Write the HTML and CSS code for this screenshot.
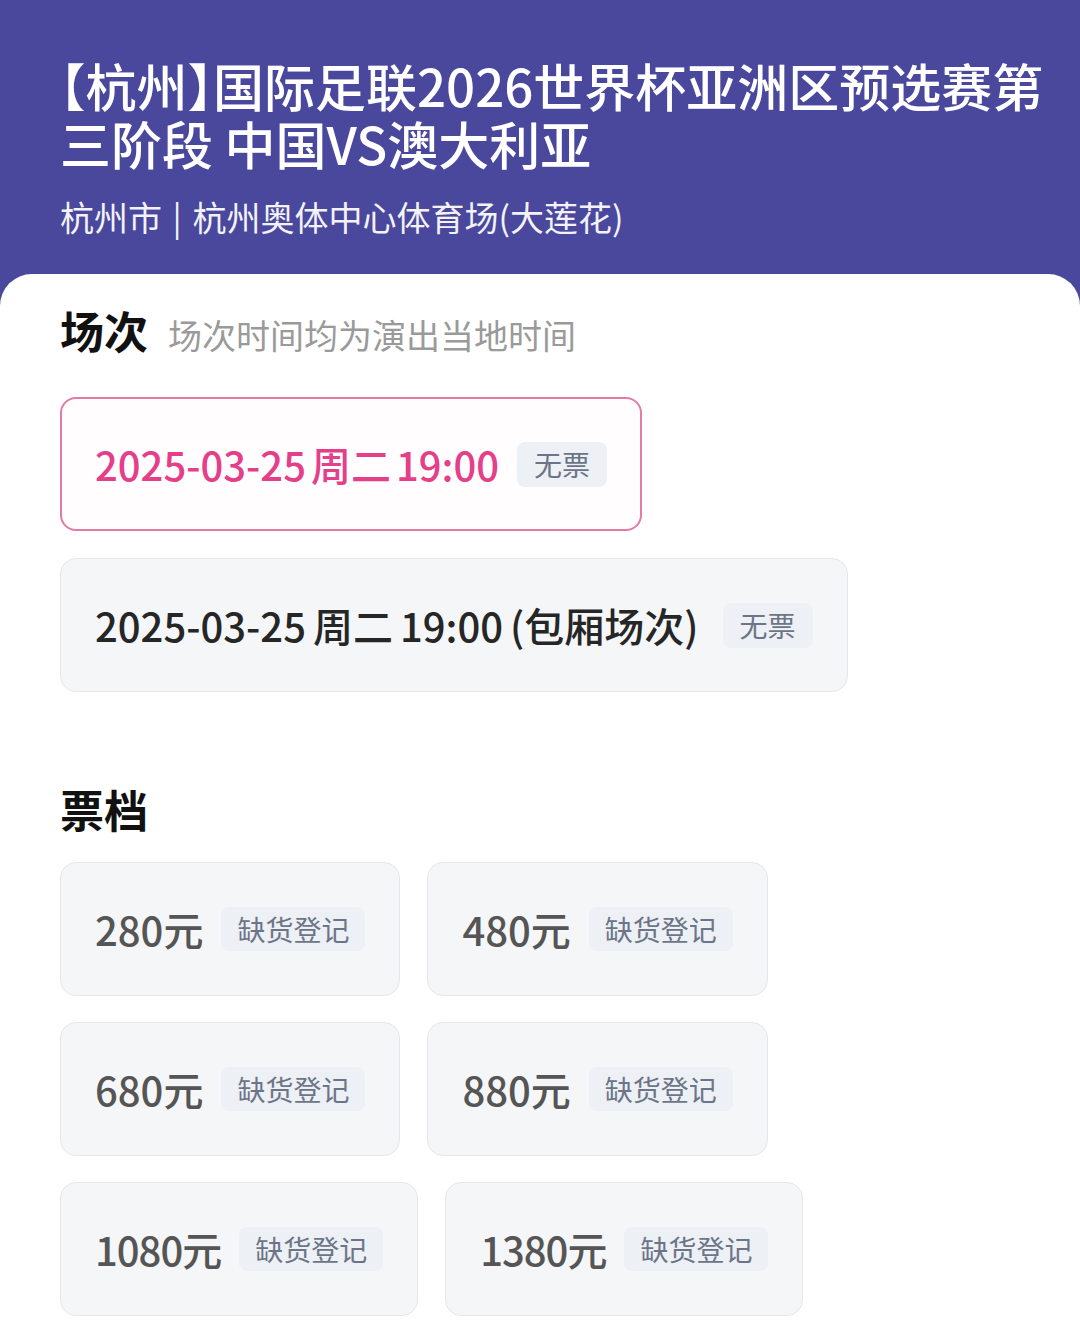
FILE: index.html
```html
<!DOCTYPE html>
<html lang="zh-CN">
<head>
<meta charset="utf-8">
<title>杭州 国际足联2026世界杯亚洲区预选赛</title>
<link rel="stylesheet" href="styles.css">
</head>
<body>
<div class="page">
  <header class="header">
    <h1 class="title">【杭州】国际足联2026世界杯亚洲区预选赛第三阶段 中国VS澳大利亚</h1>
    <p class="venue">杭州市 | 杭州奥体中心体育场(大莲花)</p>
  </header>
  <main class="panel">
    <section class="section">
      <div class="heading-row">
        <h2 class="heading">场次</h2>
        <span class="hint">场次时间均为演出当地时间</span>
      </div>
      <div class="sessions">
        <div class="session session-active">
          <span class="session-text">2025-03-25 周二 19:00</span>
          <span class="tag tag-session">无票</span>
        </div>
        <div class="session session-box">
          <span class="session-text">2025-03-25 周二 19:00 (包厢场次)</span>
          <span class="tag tag-session">无票</span>
        </div>
      </div>
    </section>
    <section class="section section-tiers">
      <div class="heading-row">
        <h2 class="heading">票档</h2>
      </div>
      <div class="tiers">
        <div class="tier"><span class="price">280元</span><span class="tag tag-tier">缺货登记</span></div>
        <div class="tier"><span class="price">480元</span><span class="tag tag-tier">缺货登记</span></div>
        <div class="tier"><span class="price">680元</span><span class="tag tag-tier">缺货登记</span></div>
        <div class="tier"><span class="price">880元</span><span class="tag tag-tier">缺货登记</span></div>
        <div class="tier"><span class="price price-narrow">1080元</span><span class="tag tag-tier">缺货登记</span></div>
        <div class="tier"><span class="price price-narrow">1380元</span><span class="tag tag-tier">缺货登记</span></div>
      </div>
    </section>
  </main>
</div>
</body>
</html>
```
FILE: styles.css
```css
* { box-sizing: border-box; }
html, body { margin: 0; padding: 0; }
body {
  font-family: "Noto Sans CJK SC", "Noto Sans", sans-serif;
  background: #ffffff;
  width: 1080px;
}
.page {
  background: #4a489c;
  min-height: 1334px;
  display: flex;
  flex-direction: column;
}
.header {
  padding: 56px 10px 35px 60px;
  color: #ffffff;
}
.title {
  margin: 0;
  font-size: 51px;
  line-height: 58px;
  font-weight: 500;
  font-feature-settings: "halt";
}
.venue {
  margin: 23px 0 0;
  font-size: 34px;
  line-height: 44px;
  font-weight: 400;
  color: #f2f2f8;
  word-spacing: 3px;
}
.panel {
  flex: 1;
  background: #ffffff;
  border-radius: 32px 32px 0 0;
  padding: 26px 60px 0 60px;
}
.heading-row {
  display: flex;
  align-items: baseline;
  gap: 20px;
}
.heading {
  margin: 0;
  font-size: 44px;
  line-height: 60px;
  font-weight: 700;
  color: #111111;
}
.hint {
  font-size: 34px;
  color: #9a9a9a;
}
.sessions {
  margin-top: 37px;
  display: flex;
  flex-direction: column;
  align-items: flex-start;
  gap: 27px;
}
.session {
  height: 134px;
  display: flex;
  align-items: center;
  gap: 18px;
  padding: 0 34px;
  background: #f5f6f8;
  border: 1px solid #e6e7ea;
  border-radius: 16px;
}
.session-active {
  background: #fffdfe;
  border: 2px solid #e67aa5;
  padding: 0 33px;
}
.session-box {
  gap: 24px;
}
.session-text {
  font-size: 40px;
  font-weight: 500;
  color: #262626;
  word-spacing: -4px;
}
.session-box .session-text {
  word-spacing: -2px;
}
.session-active .session-text {
  color: #e53f8a;
}
.tag {
  display: inline-flex;
  align-items: center;
  justify-content: center;
  background: #edf0f4;
  color: #6c7588;
  border-radius: 8px;
  font-size: 28px;
}
.tag-session {
  width: 90px;
  height: 45px;
}
.section-tiers {
  margin-top: 87px;
}
.tiers {
  margin-top: 23px;
  display: flex;
  flex-wrap: wrap;
  gap: 26px 27px;
  width: 790px;
}
.tier {
  height: 134px;
  display: flex;
  align-items: center;
  gap: 18px;
  padding: 0 34px;
  background: #f5f6f8;
  border: 1px solid #e6e7ea;
  border-radius: 16px;
}
.price {
  font-size: 40px;
  font-weight: 500;
  color: #555555;
}
.price-narrow {
  letter-spacing: -1px;
}
.tag-tier {
  height: 44px;
  padding: 0 16px;
}
```
